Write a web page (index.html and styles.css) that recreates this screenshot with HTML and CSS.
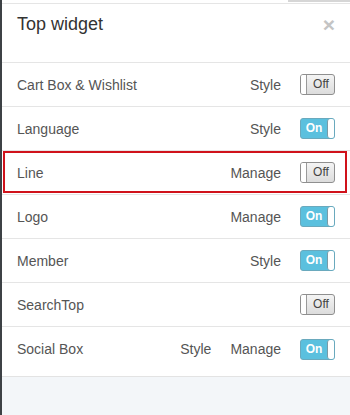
FILE: index.html
```html
<!DOCTYPE html>
<html lang="en">
<head>
    <meta charset="UTF-8">
    <meta name="viewport" content="width=device-width, initial-scale=1.0">
    <title>Top widget</title>
    <link rel="stylesheet" href="styles.css">
</head>
<body>
    <div class="page">
        <div class="edge"></div>
        <div class="panel">
            <div class="topbar"><span></span></div>

            <div class="header">
                <h4>Top widget</h4>
                <button class="close">&times;</button>
            </div>

            <div class="widget-list">
                <div class="row">
                    <span class="name">Cart Box &amp; Wishlist</span>
                    <a class="action">Style</a>
                    <div class="switch off"><span class="knob"></span><span class="label">Off</span></div>
                </div>
                <div class="row">
                    <span class="name">Language</span>
                    <a class="action">Style</a>
                    <div class="switch on"><span class="label">On</span><span class="knob"></span></div>
                </div>
                <div class="row marked">
                    <span class="name">Line</span>
                    <a class="action">Manage</a>
                    <div class="switch off"><span class="knob"></span><span class="label">Off</span></div>
                </div>
                <div class="row">
                    <span class="name">Logo</span>
                    <a class="action">Manage</a>
                    <div class="switch on"><span class="label">On</span><span class="knob"></span></div>
                </div>
                <div class="row">
                    <span class="name">Member</span>
                    <a class="action">Style</a>
                    <div class="switch on"><span class="label">On</span><span class="knob"></span></div>
                </div>
                <div class="row">
                    <span class="name">SearchTop</span>
                    <div class="switch off"><span class="knob"></span><span class="label">Off</span></div>
                </div>
                <div class="row last">
                    <span class="name">Social Box</span>
                    <a class="action">Style</a>
                    <a class="action">Manage</a>
                    <div class="switch on"><span class="label">On</span><span class="knob"></span></div>
                </div>
            </div>

            <div class="footer"></div>
        </div>
    </div>
</body>
</html>
```

FILE: styles.css
```css
* {
    box-sizing: border-box;
}

body {
    margin: 0;
    font-family: 'Liberation Sans', Arial, sans-serif;
    background: #fff;
    color: #555;
}

.page {
    display: flex;
    height: 415px;
}

.edge {
    width: 2px;
    background: #3d4145;
}

.panel {
    flex: 1;
    display: flex;
    flex-direction: column;
}

.topbar {
    height: 3px;
    display: flex;
    justify-content: flex-end;
}

.topbar span {
    width: 62px;
    height: 2px;
    background: #d6d6d6;
}

.header {
    display: flex;
    justify-content: space-between;
    align-items: flex-start;
    height: 60px;
    padding: 10px 15px 0 15px;
    border-top: 1px solid #e5e5e5;
    border-bottom: 1px solid #e5e5e5;
}

.header h4 {
    margin: 0;
    font-size: 18px;
    line-height: 20px;
    font-weight: normal;
    color: #333;
}

.close {
    padding: 0;
    margin-top: 1px;
    border: none;
    background: none;
    font-family: 'Liberation Sans', Arial, sans-serif;
    font-size: 21px;
    font-weight: bold;
    line-height: 20px;
    color: #c4c4c4;
    cursor: pointer;
}

.widget-list {
    padding-bottom: 5px;
    border-bottom: 1px solid #e3e3e3;
}

.row {
    position: relative;
    display: flex;
    align-items: center;
    gap: 19px;
    height: 44px;
    padding: 0 15px;
    border-bottom: 1px solid #e5e5e5;
    font-size: 14px;
}

.row.last {
    border-bottom: none;
}

.row.marked::after {
    content: '';
    position: absolute;
    top: 0;
    bottom: 1px;
    left: 1px;
    right: 3px;
    border: 2px solid #d0121b;
}

.name {
    margin-right: auto;
}

.action {
    color: #555;
    cursor: pointer;
}

.switch {
    display: flex;
    width: 35px;
    height: 21px;
    border: 1px solid #8f8f8f;
    border-radius: 3px;
    overflow: hidden;
    font-size: 12px;
    line-height: 19px;
}

.switch .label {
    flex: 1;
    text-align: center;
}

.switch.off {
    background: linear-gradient(#f4f4f4, #dcdcdc);
    color: #444;
}

.switch.off .knob {
    width: 6px;
    background: #fff;
    border-right: 1px solid #9a9a9a;
}

.switch.off .label {
    padding-left: 1px;
}

.switch.on {
    background: #5bc0de;
    border-color: #6aa9bd;
    color: #fff;
    font-weight: bold;
}

.switch.on .knob {
    width: 7px;
    background: #fff;
    border-left: 1px solid #7a9aa6;
    border-radius: 3px 0 0 3px;
}

.footer {
    flex: 1;
    background: #f3f6f9;
}
```
